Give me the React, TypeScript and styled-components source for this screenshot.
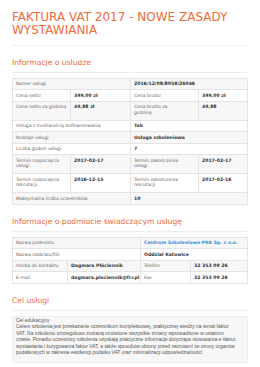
import React from "react";
import styled, { createGlobalStyle } from "styled-components";

const Global = createGlobalStyle`
  html, body { margin: 0; padding: 0; background: #fff; }
  body { font-family: "DejaVu Sans", Verdana, sans-serif; color: #333; }
`;

const Page = styled.div`
  padding: 11px 12px 12px 12px;
  width: 236px;
`;

const Title = styled.h1`
  margin: 0;
  font-size: 12px;
  line-height: 13.3px;
  font-weight: normal;
  color: #f26b3a;
  text-transform: uppercase;
`;

const Divider = styled.hr<{ $top?: number; $bottom?: number }>`
  border: 0;
  border-top: 1px solid #eee;
  margin: ${(p) => `${p.$top ?? 7}px 0 ${p.$bottom ?? 5}px`};
`;

const Heading = styled.h2`
  margin: 12px 0 0;
  font-size: 7.6px;
  line-height: 10px;
  font-weight: normal;
  color: #f26b3a;
`;

const Table = styled.table`
  width: 100%;
  border-collapse: collapse;
  table-layout: fixed;
  border: 1px solid #e4e4e4;
  font-size: 4.5px;
  line-height: 5.5px;
`;

const Row = styled.tr<{ $striped?: boolean; $tall?: boolean }>`
  background: ${(p) => (p.$striped ? "#f7f7f7" : "#fff")};
  height: ${(p) => (p.$tall ? "19px" : "11.5px")};
`;

const Label = styled.td`
  border: 1px solid #e4e4e4;
  padding: 2.5px 3px;
  color: #666;
  vertical-align: top;
`;

const LabelText = styled.span`
  display: block;
  max-width: 52px;
`;

const Value = styled.td<{ $link?: boolean }>`
  border: 1px solid #e4e4e4;
  padding: 2.5px 3px;
  font-weight: bold;
  font-size: 4.6px;
  color: ${(p) => (p.$link ? "#3b8fd8" : "#333")};
  vertical-align: top;
  white-space: nowrap;
`;

const Goal = styled.div`
  background: #f7f7f7;
  border: 1px solid #eee;
  padding: 1px 3px 5px;
  font-family: "Liberation Sans", Arial, sans-serif;
  font-size: 4.95px;
  line-height: 6.5px;
  color: #555;
  white-space: nowrap;
  overflow: hidden;
`;

const goalLines = [
  "Cel edukacyjny",
  "Celem szkolenia jest przekazanie uczestnikom kompleksowej, praktycznej wiedzy na temat faktur",
  "VAT. Na szkoleniu szczegółowo zostaną omówione wszystkie zmiany wprowadzone w ostatnim",
  "czasie. Ponadto uczestnicy szkolenia uzyskają praktyczne informacje dotyczące stosowania e-faktur,",
  "wystawiania i korygowania faktur VAT, a także sposobów obrony przed zarzutami ze strony organów",
  "podatkowych w zakresie ewidencji podatku VAT oraz minimalizacji odpowiedzialności",
];

type Pair = [string, string, string, string];

const PairRow = ({ cells, striped, tall }: { cells: Pair; striped?: boolean; tall?: boolean }) => (
  <Row $striped={striped} $tall={tall}>
    <Label>
      <LabelText>{cells[0]}</LabelText>
    </Label>
    <Value>{cells[1]}</Value>
    <Label>
      <LabelText>{cells[2]}</LabelText>
    </Label>
    <Value>{cells[3]}</Value>
  </Row>
);

export default function App() {
  return (
    <>
      <Global />
      <Page>
        <Title>Faktura VAT 2017 - nowe zasady wystawiania</Title>
        <Divider />
        <Heading>Informacje o usłudze</Heading>
        <Divider $top={4} $bottom={5} />
        <Table>
          <colgroup>
            <col style={{ width: 58 }} />
            <col style={{ width: 60 }} />
            <col style={{ width: 68 }} />
            <col style={{ width: 49 }} />
          </colgroup>
          <tbody>
            <Row $striped>
              <Label colSpan={2}>Numer usługi</Label>
              <Value colSpan={2}>2016/12/08/8058/26046</Value>
            </Row>
            <PairRow cells={["Cena netto", "399,00 zł", "Cena brutto", "399,00 zł"]} />
            <PairRow striped tall cells={["Cena netto za godzinę", "49,88 zł", "Cena brutto za godzinę", "49,88"]} />
            <Row>
              <Label colSpan={2}>Usługa z możliwością dofinansowania</Label>
              <Value colSpan={2}>Tak</Value>
            </Row>
            <Row $striped>
              <Label colSpan={2}>Rodzaje usługi</Label>
              <Value colSpan={2}>Usługa szkoleniowa</Value>
            </Row>
            <Row>
              <Label colSpan={2}>Liczba godzin usługi</Label>
              <Value colSpan={2}>7</Value>
            </Row>
            <PairRow
              striped
              tall
              cells={["Termin rozpoczęcia usługi", "2017-02-17", "Termin zakończenia usługi", "2017-02-17"]}
            />
            <PairRow
              tall
              cells={["Termin rozpoczęcia rekrutacji", "2016-12-15", "Termin zakończenia rekrutacji", "2017-02-16"]}
            />
            <Row $striped>
              <Label colSpan={2}>Maksymalna liczba uczestników</Label>
              <Value colSpan={2}>10</Value>
            </Row>
          </tbody>
        </Table>
        <Heading>Informacje o podmiocie świadczącym usługę</Heading>
        <Divider $top={4} $bottom={5} />
        <Table>
          <colgroup>
            <col style={{ width: 55 }} />
            <col style={{ width: 73 }} />
            <col style={{ width: 50 }} />
            <col style={{ width: 57 }} />
          </colgroup>
          <tbody>
            <Row $striped>
              <Label colSpan={2}>Nazwa podmiotu</Label>
              <Value colSpan={2} $link>Centrum Szkoleniowe PRK Sp. z o.o.</Value>
            </Row>
            <Row>
              <Label colSpan={2}>Nazwa oddziału/filii</Label>
              <Value colSpan={2}>Oddział Katowice</Value>
            </Row>
            <PairRow striped cells={["Osoba do kontaktu", "Dagmara Płóciennik", "Telefon", "32 353 09 26"]} />
            <PairRow cells={["E-mail", "dagmara.plociennik@frr.pl", "Fax", "32 353 09 26"]} />
          </tbody>
        </Table>
        <Heading>Cel usługi</Heading>
        <Divider $top={4} $bottom={5} />
        <Goal>
          {goalLines.map((line, i) => (
            <React.Fragment key={i}>
              {i > 0 && <br />}
              {line}
            </React.Fragment>
          ))}
        </Goal>
      </Page>
    </>
  );
}
